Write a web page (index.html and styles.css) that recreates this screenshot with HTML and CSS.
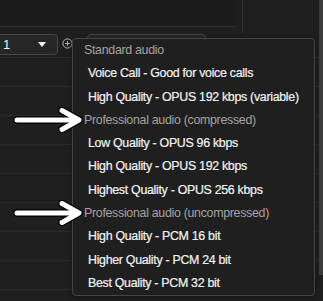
FILE: index.html
```html
<!DOCTYPE html>
<html lang="en">
<head>
  <meta charset="UTF-8" />
  <meta name="viewport" content="width=device-width, initial-scale=1.0"/>
  <title>Audio Quality</title>
  <link rel="stylesheet" href="styles.css">
</head>
<body>
  <div class="app">
    <div class="main">
      <div class="topbar">
        <div class="title-area"></div>
        <div class="divider"></div>
      </div>
      <div class="toolbar">
        <div class="select select-count">
          <span>1</span>
          <span class="caret"></span>
        </div>
        <svg class="add-icon" width="11" height="11" viewBox="0 0 11 11">
          <circle cx="5.5" cy="5.5" r="4.6" fill="none" stroke="#b5b5b5" stroke-width="1"/>
          <path d="M5.5 3v5M3 5.5h5" stroke="#b5b5b5" stroke-width="1"/>
        </svg>
        <div class="select select-quality"></div>
      </div>
      <div class="rows">
        <div class="row"></div>
        <div class="row"></div>
        <div class="row"></div>
        <div class="row"></div>
        <div class="row"></div>
        <div class="row"></div>
        <div class="row"></div>
        <div class="row"></div>
      </div>
    </div>
    <div class="scrollbar"><div class="thumb"></div></div>
  </div>

  <ul class="menu">
    <li class="group">Standard audio</li>
    <li>Voice Call - Good for voice calls</li>
    <li>High Quality - OPUS 192 kbps (variable)</li>
    <li class="group">Professional audio (compressed)</li>
    <li>Low Quality - OPUS 96 kbps</li>
    <li>High Quality - OPUS 192 kbps</li>
    <li>Highest Quality - OPUS 256 kbps</li>
    <li class="group">Professional audio (uncompressed)</li>
    <li>High Quality - PCM 16 bit</li>
    <li>Higher Quality - PCM 24 bit</li>
    <li>Best Quality - PCM 32 bit</li>
  </ul>

  <!-- annotation arrows -->
  <svg class="arrow arrow-compressed" width="70" height="26" viewBox="0 0 70 26">
    <g fill="none" stroke-linecap="round" stroke-linejoin="round">
      <path d="M4 13H64M49 3.5L66 13L49 22.5" stroke="#000" stroke-width="7.5"/>
      <path d="M4 13H64M49 3.5L66 13L49 22.5" stroke="#fff" stroke-width="5"/>
    </g>
  </svg>
  <svg class="arrow arrow-uncompressed" width="70" height="26" viewBox="0 0 70 26">
    <g fill="none" stroke-linecap="round" stroke-linejoin="round">
      <path d="M4 13H64M49 3.5L66 13L49 22.5" stroke="#000" stroke-width="7.5"/>
      <path d="M4 13H64M49 3.5L66 13L49 22.5" stroke="#fff" stroke-width="5"/>
    </g>
  </svg>
</body>
</html>
```

FILE: styles.css
```css
body {
  margin: 0;
  width: 323px;
  height: 301px;
  overflow: hidden;
  background: #1f1f1f;
  font-family: 'Liberation Sans', Arial, sans-serif;
  color: #f2f2f2;
}
.app {
  display: flex;
  height: 301px;
}
.main {
  flex: 1;
  overflow: hidden;
}
.topbar {
  display: flex;
  align-items: flex-start;
  height: 33px;
}
.title-area {
  width: 235px;
  height: 26px;
  border-bottom: 1px solid #2e2e2e;
  background: #1c1c1c;
}
.divider {
  width: 1px;
  height: 33px;
  margin-left: 7px;
  background: #333;
}
.toolbar {
  display: flex;
  align-items: flex-start;
  height: 23px;
  padding-top: 1px;
  border-bottom: 1px solid #2c2c2c;
}
.select {
  box-sizing: border-box;
  height: 21px;
  border: 1px solid #464646;
  border-radius: 4px;
  background: #262626;
}
.select-count {
  display: flex;
  align-items: center;
  width: 68px;
  margin-left: -10px;
  padding-left: 12px;
  font-size: 13px;
  color: #f4f4f4;
}
.caret {
  margin-left: auto;
  margin-right: 11px;
  border-left: 4.5px solid transparent;
  border-right: 4.5px solid transparent;
  border-top: 5px solid #f4f4f4;
}
.add-icon {
  margin: 4px 0 0 4px;
}
.select-quality {
  width: 119px;
  margin-left: 14px;
}
.row {
  height: 28px;
  border-bottom: 1px solid #2a2a2a;
}
.scrollbar {
  width: 4px;
  background: #1f1f1f;
}
.thumb {
  height: 275px;
  background: #3b3b3b;
}
.menu {
  position: absolute;
  left: 72px;
  top: 38px;
  box-sizing: border-box;
  width: 243px;
  height: 258px;
  margin: 0;
  padding: 0;
  list-style: none;
  background: #1f1f1f;
  border: 1px solid #444;
  border-radius: 4px;
  box-shadow: 0 2px 6px rgba(0, 0, 0, 0.4);
}
.menu li {
  height: 23.3px;
  line-height: 23.3px;
  padding-left: 15px;
  font-size: 12.4px;
  letter-spacing: -0.3px;
  white-space: nowrap;
  -webkit-text-stroke: 0.2px currentColor;
}
.menu li.group {
  padding-left: 11px;
  color: #a3a3a3;
  -webkit-text-stroke: 0;
}
.arrow {
  position: absolute;
  left: 13px;
}
.arrow-compressed {
  top: 107px;
}
.arrow-uncompressed {
  top: 200px;
}
```
